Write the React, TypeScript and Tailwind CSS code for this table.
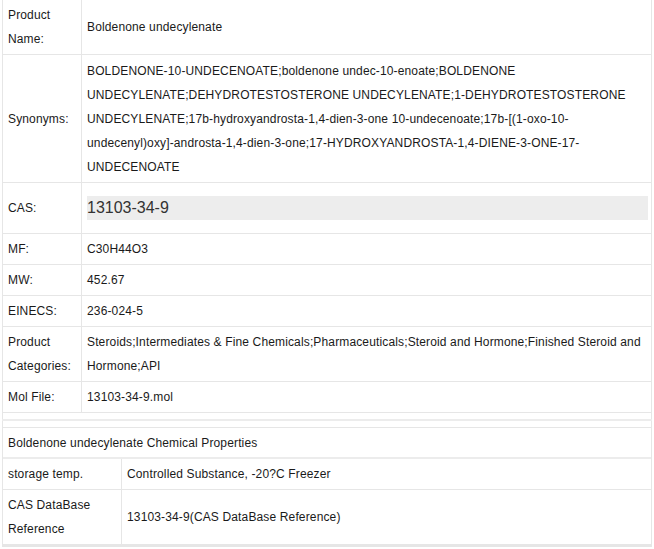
import React from "react";

// Product info rows (label may contain line breaks).
const rows: { label: React.ReactNode; value: React.ReactNode; h: string }[] = [
  {
    label: (
      <>
        Product
        <br />
        Name:
      </>
    ),
    value: "Boldenone undecylenate",
    h: "h-[55px]",
  },
  {
    label: "Synonyms:",
    value: (
      <>
        BOLDENONE-10-UNDECENOATE;boldenone undec-10-enoate;BOLDENONE
        <br />
        UNDECYLENATE;DEHYDROTESTOSTERONE UNDECYLENATE;1-DEHYDROTESTOSTERONE
        <br />
        UNDECYLENATE;17b-hydroxyandrosta-1,4-dien-3-one 10-undecenoate;17b-[(1-oxo-10-
        <br />
        undecenyl)oxy]-androsta-1,4-dien-3-one;17-HYDROXYANDROSTA-1,4-DIENE-3-ONE-17-
        <br />
        UNDECENOATE
      </>
    ),
    h: "h-[128px]",
  },
];

const simpleRows = [
  { label: "MF:", value: "C30H44O3" },
  { label: "MW:", value: "452.67" },
  { label: "EINECS:", value: "236-024-5" },
];

function Row({
  label,
  children,
  h,
  labelW = "grid-cols-[79px_1fr]",
}: {
  label: React.ReactNode;
  children: React.ReactNode;
  h: string;
  labelW?: string;
}) {
  return (
    <div className={`grid ${labelW} border-b border-[#e6e6e6] ${h}`}>
      <div className="flex items-center border-r border-[#e6e6e6] pl-[5px]">
        <div>{label}</div>
      </div>
      <div className="flex items-center pl-[5px] pr-[3px]">
        <div className="whitespace-nowrap">{children}</div>
      </div>
    </div>
  );
}

export default function App() {
  return (
    <div
      className="w-[654px] h-[549px] bg-white pl-[2px] pr-[2px] text-[12px] leading-[24px] tracking-[0.14px] text-[#1a1a1a] overflow-hidden"
      style={{ fontFamily: '"Liberation Sans", Arial, sans-serif' }}
    >
      {/* Product table */}
      <div className="border-l border-r border-[#e6e6e6]">
        {rows.map((r, i) => (
          <Row key={i} label={r.label} h={r.h}>
            {r.value}
          </Row>
        ))}
        <div className="grid grid-cols-[79px_1fr] border-b border-[#e6e6e6] h-[51px]">
          <div className="flex items-center border-r border-[#e6e6e6] pl-[5px]">CAS:</div>
          <div className="flex items-center pl-[5px] pr-[3px]">
            <div className="w-full h-[24px] bg-[#ededed] text-[16px] leading-[24px] tracking-normal text-[#333]">
              13103-34-9
            </div>
          </div>
        </div>
        {simpleRows.map((r) => (
          <Row key={r.label} label={r.label} h="h-[31px]">
            {r.value}
          </Row>
        ))}
        <Row
          label={
            <>
              Product
              <br />
              Categories:
            </>
          }
          h="h-[55px]"
        >
          Steroids;Intermediates &amp; Fine Chemicals;Pharmaceuticals;Steroid and Hormone;Finished Steroid and
          <br />
          Hormone;API
        </Row>
        <Row label="Mol File:" h="h-[31px]">
          13103-34-9.mol
        </Row>
      </div>

      {/* spacer strip */}
      <div className="h-[6px] border-l border-r border-[#e6e6e6]" />
      <div className="h-[2px] bg-[#ececec]" />
      <div className="h-[6px] border-l border-r border-[#e6e6e6]" />

      {/* Chemical properties table */}
      <div className="border-l border-r border-t border-b-2 border-[#e6e6e6]">
        <div className="h-[31px] flex items-center pl-[5px] border-b-2 border-[#ececec]">
          Boldenone undecylenate Chemical Properties
        </div>
        <Row label="storage temp." h="h-[31px]" labelW="grid-cols-[119px_1fr]">
          Controlled Substance, -20?C Freezer
        </Row>
        <Row
          label={
            <>
              CAS DataBase
              <br />
              Reference
            </>
          }
          h="h-[55px]"
          labelW="grid-cols-[119px_1fr]"
        >
          13103-34-9(CAS DataBase Reference)
        </Row>
      </div>
    </div>
  );
}
